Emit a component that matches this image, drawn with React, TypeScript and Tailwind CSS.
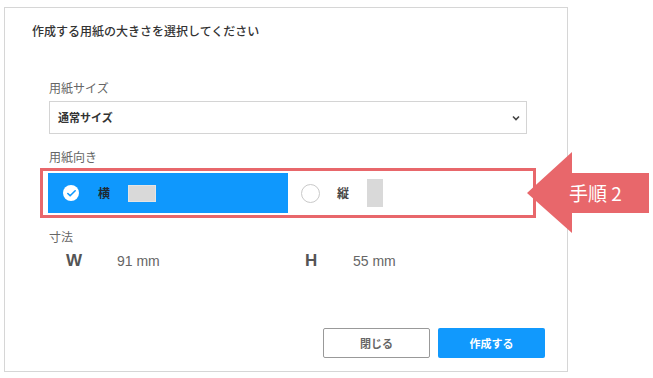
import { Check } from "lucide-react";

const font = { fontFamily: '"Noto Sans CJK JP", "Liberation Sans", sans-serif' };

function Label({ children }: { children: React.ReactNode }) {
  return <div className="text-[12px] leading-4 text-[#666]">{children}</div>;
}

function Dimension({ axis, value, labelWidth }: { axis: string; value: string; labelWidth: string }) {
  return (
    <div className="flex items-center pl-[17px]">
      <span className={`${labelWidth} text-[17px] leading-5 font-bold text-[#555] font-['Liberation_Sans',sans-serif]`}>
        {axis}
      </span>
      <span className="text-[14px] leading-5 text-[#666] font-['Liberation_Sans',sans-serif]">
        {value}
      </span>
    </div>
  );
}

export default function App() {
  return (
    <div className="relative w-[653px] h-[378px] bg-white overflow-hidden" style={font}>
      {/* Dialog */}
      <div className="ml-[4px] mt-[7px] w-[564px] h-[365px] border border-[#d6d6d6] flex flex-col">
        <div className="pl-[27px] pt-[15px] text-[12px] leading-4 font-medium text-[#333]">
          作成する用紙の大きさを選択してください
        </div>

        <div className="ml-[44px] w-[478px] mt-[41px] flex flex-col">
          <Label>用紙サイズ</Label>
          <div className="mt-[5px] h-[33px] border border-[#d4d4d4] flex items-center justify-between pl-[8px] pr-[6px]">
            <span className="text-[11px] font-bold text-[#333]">通常サイズ</span>
            <svg width="8" height="6" viewBox="0 0 8 6">
              <polyline points="1,1.5 4,4.5 7,1.5" fill="none" stroke="#444" strokeWidth="1.6" />
            </svg>
          </div>

          <div className="mt-[15px]">
            <Label>用紙向き</Label>
          </div>

          {/* Orientation (highlighted) */}
          <div className="mt-[3px] -mx-[9px] border-[3px] border-[#e8676b] px-[5px] py-[2px] flex">
            <div className="w-[240px] h-[40px] bg-[#0f98fd] flex items-center pl-[15px]">
              <span className="w-[16px] h-[16px] rounded-full bg-white flex items-center justify-center">
                <Check size={11} strokeWidth={3.5} color="#0f98fd" />
              </span>
              <span className="ml-[19px] text-[12px] font-bold text-[#1f2a33]">横</span>
              <span className="ml-[18px] w-[28px] h-[17px] bg-[#d9d9d9] border border-[#e4e4e4]" />
            </div>
            <div className="flex-1 h-[40px] flex items-center pl-[13px]">
              <span className="w-[19px] h-[19px] rounded-full border-[1.5px] border-[#c9c9c9]" />
              <span className="ml-[17px] text-[12px] font-bold text-[#444]">縦</span>
              <span className="ml-[18px] w-[16px] h-[28px] bg-[#d9d9d9]" />
            </div>
          </div>

          <div className="mt-[11px]">
            <Label>寸法</Label>
          </div>
          <div className="mt-[6px] grid grid-cols-2">
            <Dimension axis="W" value="91 mm" labelWidth="w-[51px]" />
            <Dimension axis="H" value="55 mm" labelWidth="w-[48px]" />
          </div>
        </div>

        <div className="mt-auto flex justify-end gap-[8px] pr-[22px] pb-[13px]">
          <button className="w-[107px] h-[30px] rounded-[2px] border border-[#999] bg-white text-[11px] font-bold text-[#666]">
            閉じる
          </button>
          <button className="w-[107px] h-[30px] rounded-[2px] bg-[#1199fd] text-[11px] font-bold text-white">
            作成する
          </button>
        </div>
      </div>

      {/* Step annotation arrow */}
      <div className="absolute left-[527px] top-[152px] w-[122px] h-[81px]">
        <svg width="122" height="81" viewBox="0 0 122 81" className="absolute inset-0">
          <polygon points="0,41 45,0 45,21 122,21 122,61 45,61 45,81" fill="#e8676b" />
        </svg>
        <span className="absolute left-[42px] top-[29px] text-[19px] leading-[24px] text-white whitespace-nowrap">
          手順 2
        </span>
      </div>
    </div>
  );
}
